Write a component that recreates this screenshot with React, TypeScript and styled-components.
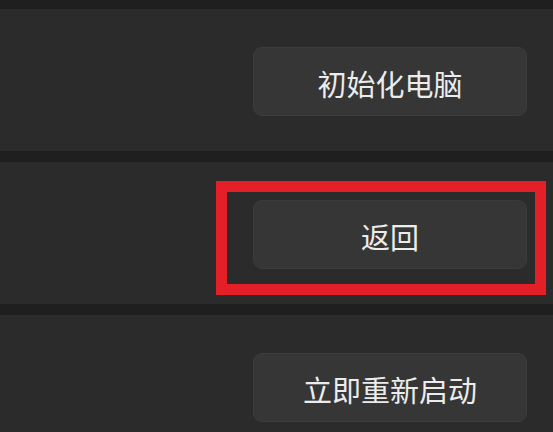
import React from "react";
import styled, { createGlobalStyle } from "styled-components";

const Global = createGlobalStyle`
  html, body {
    margin: 0;
    padding: 0;
    background: #1f1f1f;
  }
  body {
    font-family: "Noto Sans CJK SC", "Noto Sans", sans-serif;
  }
`;

const Page = styled.div`
  display: flex;
  flex-direction: column;
  gap: 11px;
  padding-top: 9px;
  width: 553px;
  height: 432px;
  overflow: hidden;
  box-sizing: border-box;
`;

const Card = styled.div`
  flex: 0 0 142px;
  background: #2b2b2b;
  display: flex;
  justify-content: flex-end;
  align-items: flex-start;
  padding: 38px 26px 0 0;
  box-sizing: border-box;
`;

const ButtonWrap = styled.div`
  position: relative;
`;

const ActionButton = styled.button`
  width: 274px;
  height: 69px;
  border-radius: 9px;
  background: #363636;
  border: 1px solid #3c3c3c;
  color: #ececec;
  font-family: "Noto Sans CJK SC", "Noto Sans", sans-serif;
  font-size: 29px;
  line-height: 1;
  padding: 4px 0 0;
  display: flex;
  align-items: center;
  justify-content: center;
  box-sizing: border-box;
  cursor: pointer;
`;

const Highlight = styled.div`
  position: absolute;
  left: -37px;
  right: -19px;
  top: -19px;
  bottom: -26px;
  border: 11px solid #e51f27;
  pointer-events: none;
`;

const rows: { label: string; highlighted?: boolean }[] = [
  { label: "初始化电脑" },
  { label: "返回", highlighted: true },
  { label: "立即重新启动" },
];

export default function App() {
  return (
    <>
      <Global />
      <Page>
        {rows.map((r) => (
          <Card key={r.label}>
            <ButtonWrap>
              <ActionButton>{r.label}</ActionButton>
              {r.highlighted && <Highlight />}
            </ButtonWrap>
          </Card>
        ))}
      </Page>
    </>
  );
}
